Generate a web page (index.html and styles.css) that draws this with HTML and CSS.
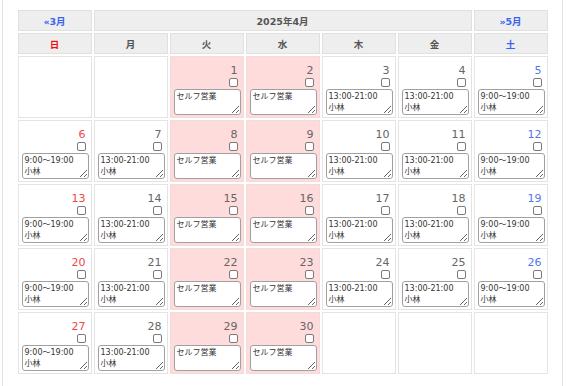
FILE: index.html
```html
<!DOCTYPE html>
<html lang="ja">
<head>
<meta charset="utf-8">
<title>2025年4月</title>
<link rel="stylesheet" href="styles.css">
</head>
<body>
<div class="page">
<table class="cal">
  <tr class="nav">
    <th><a class="navlink" href="#">«3月</a></th>
    <th colspan="5" class="title">2025年4月</th>
    <th><a class="navlink" href="#">»5月</a></th>
  </tr>
  <tr class="dow">
    <th class="sun">日</th><th>月</th><th>火</th><th>水</th><th>木</th><th>金</th><th class="sat">土</th>
  </tr>
  <tr>
    <td></td><td></td>
    <td class="self"><div class="num">1</div><div class="chk"><input type="checkbox"></div><textarea>セルフ営業</textarea></td>
    <td class="self"><div class="num">2</div><div class="chk"><input type="checkbox"></div><textarea>セルフ営業</textarea></td>
    <td><div class="num">3</div><div class="chk"><input type="checkbox"></div><textarea>13:00-21:00
小林</textarea></td>
    <td><div class="num">4</div><div class="chk"><input type="checkbox"></div><textarea>13:00-21:00
小林</textarea></td>
    <td><div class="num sat">5</div><div class="chk"><input type="checkbox"></div><textarea>9:00〜19:00
小林</textarea></td>
  </tr>
  <tr>
    <td><div class="num sun">6</div><div class="chk"><input type="checkbox"></div><textarea>9:00〜19:00
小林</textarea></td>
    <td><div class="num">7</div><div class="chk"><input type="checkbox"></div><textarea>13:00-21:00
小林</textarea></td>
    <td class="self"><div class="num">8</div><div class="chk"><input type="checkbox"></div><textarea>セルフ営業</textarea></td>
    <td class="self"><div class="num">9</div><div class="chk"><input type="checkbox"></div><textarea>セルフ営業</textarea></td>
    <td><div class="num">10</div><div class="chk"><input type="checkbox"></div><textarea>13:00-21:00
小林</textarea></td>
    <td><div class="num">11</div><div class="chk"><input type="checkbox"></div><textarea>13:00-21:00
小林</textarea></td>
    <td><div class="num sat">12</div><div class="chk"><input type="checkbox"></div><textarea>9:00〜19:00
小林</textarea></td>
  </tr>
  <tr>
    <td><div class="num sun">13</div><div class="chk"><input type="checkbox"></div><textarea>9:00〜19:00
小林</textarea></td>
    <td><div class="num">14</div><div class="chk"><input type="checkbox"></div><textarea>13:00-21:00
小林</textarea></td>
    <td class="self"><div class="num">15</div><div class="chk"><input type="checkbox"></div><textarea>セルフ営業</textarea></td>
    <td class="self"><div class="num">16</div><div class="chk"><input type="checkbox"></div><textarea>セルフ営業</textarea></td>
    <td><div class="num">17</div><div class="chk"><input type="checkbox"></div><textarea>13:00-21:00
小林</textarea></td>
    <td><div class="num">18</div><div class="chk"><input type="checkbox"></div><textarea>13:00-21:00
小林</textarea></td>
    <td><div class="num sat">19</div><div class="chk"><input type="checkbox"></div><textarea>9:00〜19:00
小林</textarea></td>
  </tr>
  <tr>
    <td><div class="num sun">20</div><div class="chk"><input type="checkbox"></div><textarea>9:00〜19:00
小林</textarea></td>
    <td><div class="num">21</div><div class="chk"><input type="checkbox"></div><textarea>13:00-21:00
小林</textarea></td>
    <td class="self"><div class="num">22</div><div class="chk"><input type="checkbox"></div><textarea>セルフ営業</textarea></td>
    <td class="self"><div class="num">23</div><div class="chk"><input type="checkbox"></div><textarea>セルフ営業</textarea></td>
    <td><div class="num">24</div><div class="chk"><input type="checkbox"></div><textarea>13:00-21:00
小林</textarea></td>
    <td><div class="num">25</div><div class="chk"><input type="checkbox"></div><textarea>13:00-21:00
小林</textarea></td>
    <td><div class="num sat">26</div><div class="chk"><input type="checkbox"></div><textarea>9:00〜19:00
小林</textarea></td>
  </tr>
  <tr>
    <td><div class="num sun">27</div><div class="chk"><input type="checkbox"></div><textarea>9:00〜19:00
小林</textarea></td>
    <td><div class="num">28</div><div class="chk"><input type="checkbox"></div><textarea>13:00-21:00
小林</textarea></td>
    <td class="self"><div class="num">29</div><div class="chk"><input type="checkbox"></div><textarea>セルフ営業</textarea></td>
    <td class="self"><div class="num">30</div><div class="chk"><input type="checkbox"></div><textarea>セルフ営業</textarea></td>
    <td></td><td></td><td></td>
  </tr>
</table>
</div>
</body>
</html>
```
FILE: styles.css
```css
html, body {
  margin: 0;
  padding: 0;
  height: 100%;
  background: #ffffff;
}
body {
  font-family: "DejaVu Sans", "Noto Sans CJK JP", sans-serif;
  color: #555555;
}
.page {
  box-sizing: border-box;
  margin-left: 2px;
  width: 561px;
  min-height: 100%;
  border-left: 1px solid #e2e2e2;
  border-right: 1px solid #e2e2e2;
  padding-top: 8px;
}
.cal {
  border-collapse: separate;
  border-spacing: 2px;
  margin: 0 auto;
  table-layout: fixed;
  width: 534px;
}
.cal th {
  background: #eeeeee;
  border: 1px solid #e0e0e0;
  height: 19px;
  padding: 0;
  font-size: 9.5px;
  font-weight: bold;
  color: #555555;
  text-align: center;
  vertical-align: middle;
}
.navlink {
  color: #3b63f0;
  text-decoration: none;
}
.cal th.sun { color: #f01010; }
.cal th.sat { color: #3b63f0; }
.cal td {
  border: 1px solid #e4e4e4;
  height: 62px;
  padding: 7px 2px 0 3px;
  vertical-align: top;
  background: #ffffff;
  box-sizing: border-box;
}
.cal td.self {
  background: #ffdcdc;
  border-color: #f4dada;
}
.num {
  text-align: right;
  font-size: 11px;
  line-height: 13px;
  padding-right: 3px;
  color: #666666;
}
.num.sun { color: #f04848; }
.num.sat { color: #5577ee; }
.chk {
  text-align: right;
  padding-right: 3px;
  height: 9px;
  margin-top: 1px;
  line-height: 0;
}
.chk input {
  appearance: none;
  -webkit-appearance: none;
  box-sizing: border-box;
  width: 9px;
  height: 9px;
  margin: 0;
  border: 1px solid #7a7a7a;
  border-radius: 2px;
  background: #ffffff;
}
textarea {
  display: block;
  box-sizing: border-box;
  width: 67px;
  height: 26px;
  margin: 2px 0 0 0;
  padding: 1px 1px 1px 2px;
  border: 1px solid #a0a0a0;
  border-radius: 3px;
  background: #ffffff;
  font-family: "DejaVu Sans", "Noto Sans CJK JP", sans-serif;
  font-size: 8px;
  line-height: 11px;
  color: #333333;
  overflow: hidden;
}
```
